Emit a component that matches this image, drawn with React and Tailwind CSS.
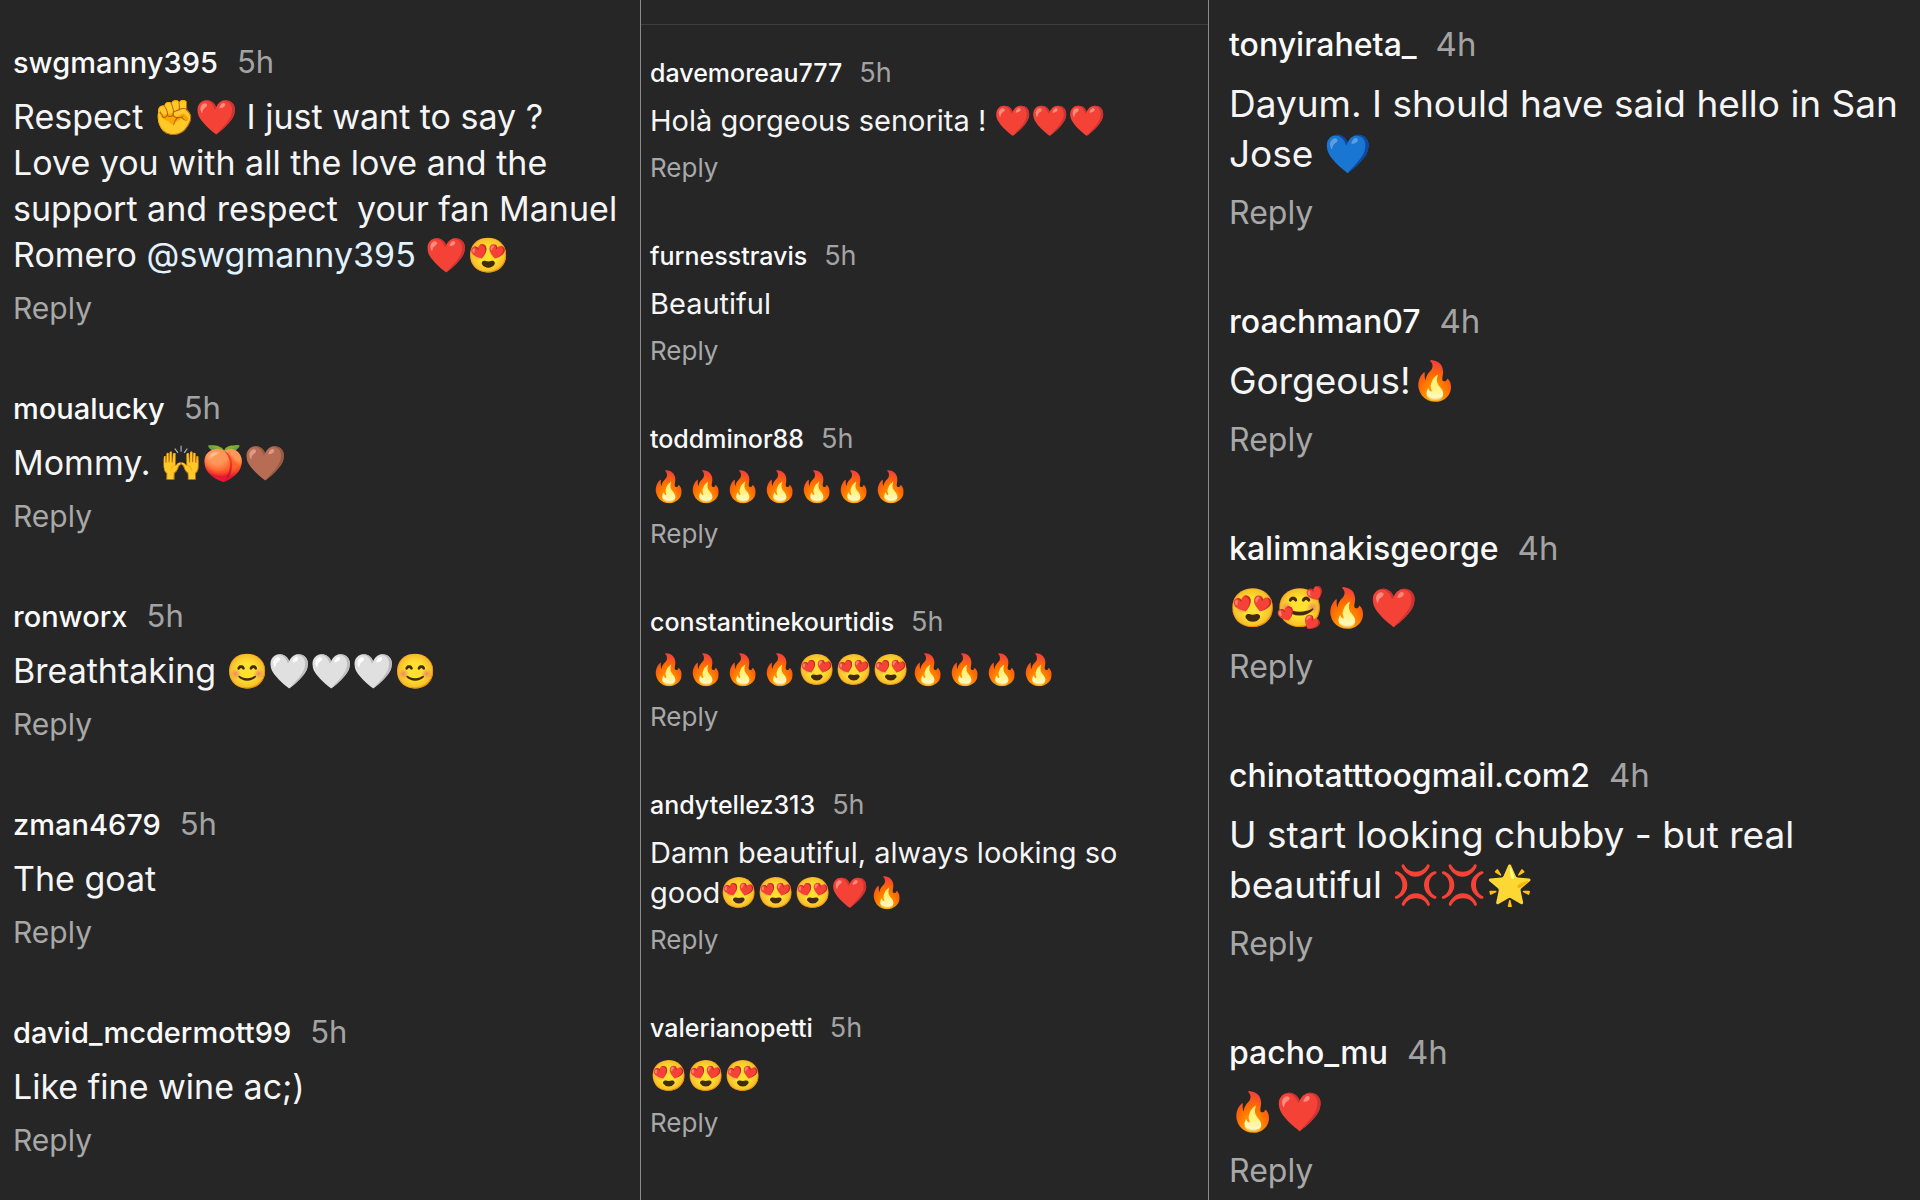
const columns = [
  {
    section: "pt-11 pl-[13px] pr-2",
    list: "gap-16",
    item: "gap-3",
    name: "text-[29px] leading-[38px] gap-[19px]",
    age: "text-[31px]",
    text: "text-[34px] leading-[46px]",
    emoji: "text-[34px]",
    reply: "text-[30px] leading-[36px]",
    comments: [
      { user: "swgmanny395", age: "5h", lines: ["Respect ✊❤️ I just want to say ?", "Love you with all the love and the", "support and respect  your fan Manuel", "Romero @swgmanny395 ❤️😍"] },
      { user: "moualucky", age: "5h", lines: ["Mommy. 🙌🍑🤎"] },
      { user: "ronworx", age: "5h", lines: ["Breathtaking 😊🤍🤍🤍😊"] },
      { user: "zman4679", age: "5h", lines: ["The goat"] },
      { user: "david_mcdermott99", age: "5h", lines: ["Like fine wine ac;)"] },
    ],
  },
  {
    section: "border-l border-[#8c8c8c]",
    ruled: true,
    list: "gap-[53px] pt-[30px] pl-[9px] pr-2",
    item: "gap-[10px]",
    name: "text-[25px] leading-[36px] gap-[17px]",
    age: "text-[27px]",
    text: "text-[29px] leading-[40px]",
    emoji: "text-[30px]",
    reply: "text-[26px] leading-[34px]",
    comments: [
      { user: "davemoreau777", age: "5h", lines: ["Holà gorgeous senorita ! ❤️❤️❤️"] },
      { user: "furnesstravis", age: "5h", lines: ["Beautiful"] },
      { user: "toddminor88", age: "5h", lines: ["🔥🔥🔥🔥🔥🔥🔥"] },
      { user: "constantinekourtidis", age: "5h", lines: ["🔥🔥🔥🔥😍😍😍🔥🔥🔥🔥"] },
      { user: "andytellez313", age: "5h", lines: ["Damn beautiful, always looking so", "good😍😍😍❤️🔥"] },
      { user: "valerianopetti", age: "5h", lines: ["😍😍😍"] },
    ],
  },
  {
    section: "border-l border-[#8c8c8c] pt-[23px] pl-5 pr-2",
    list: "gap-[65px]",
    item: "gap-3",
    name: "text-[32px] leading-[44px] gap-[19px]",
    age: "text-[33px]",
    text: "text-[37px] leading-[50px]",
    emoji: "text-[38px]",
    reply: "text-[32px] leading-[44px]",
    comments: [
      { user: "tonyiraheta_", age: "4h", lines: ["Dayum. I should have said hello in San", "Jose 💙"] },
      { user: "roachman07", age: "4h", lines: ["Gorgeous!🔥"] },
      { user: "kalimnakisgeorge", age: "4h", lines: ["😍🥰🔥❤️"] },
      { user: "chinotatttoogmail.com2", age: "4h", lines: ["U start looking chubby - but real", "beautiful 💢💢🌟"] },
      { user: "pacho_mu", age: "4h", lines: ["🔥❤️"] },
    ],
  },
];

// Splits a line into mentions, runs of emoji and plain text.
const TOKENS = /(@\w+|(?:\p{Extended_Pictographic}\uFE0F?)+)/u;

function Line({ text, emoji }) {
  return (
    <span className="block whitespace-pre">
      {text.split(TOKENS).map((part, i) => {
        if (part.startsWith("@")) {
          return <a key={i} href="#profile" className="text-[#e0f1ff]">{part}</a>;
        }
        if (/^\p{Extended_Pictographic}/u.test(part)) {
          return <span key={i} className={`leading-none ${emoji}`}>{part}</span>;
        }
        return part;
      })}
    </span>
  );
}

function Comment({ comment, styles }) {
  return (
    <li className={`flex flex-col items-start ${styles.item}`}>
      <div className={`flex items-baseline ${styles.name}`}>
        <a href="#profile" className="font-medium text-[#fafafa]">{comment.user}</a>
        <time className={`leading-none text-[#a3a3a3] ${styles.age}`}>{comment.age}</time>
      </div>
      <p className={`text-[#f5f5f5] ${styles.text}`}>
        {comment.lines.map((line) => <Line key={line} text={line} emoji={styles.emoji} />)}
      </p>
      <button type="button" className={`text-[#a8a8a8] ${styles.reply}`}>Reply</button>
    </li>
  );
}

export default function App() {
  return (
    <main className="grid min-h-screen grid-cols-[640fr_568fr_712fr] overflow-hidden bg-[#262626] font-['Inter',sans-serif]">
      {columns.map((column, i) => (
        <section key={i} className={`min-w-0 ${column.section}`}>
          {column.ruled && <hr className="mt-6 border-[#3c3e3d]" />}
          <ul className={`flex flex-col ${column.list}`}>
            {column.comments.map((comment) => (
              <Comment key={comment.user} comment={comment} styles={column} />
            ))}
          </ul>
        </section>
      ))}
    </main>
  );
}
